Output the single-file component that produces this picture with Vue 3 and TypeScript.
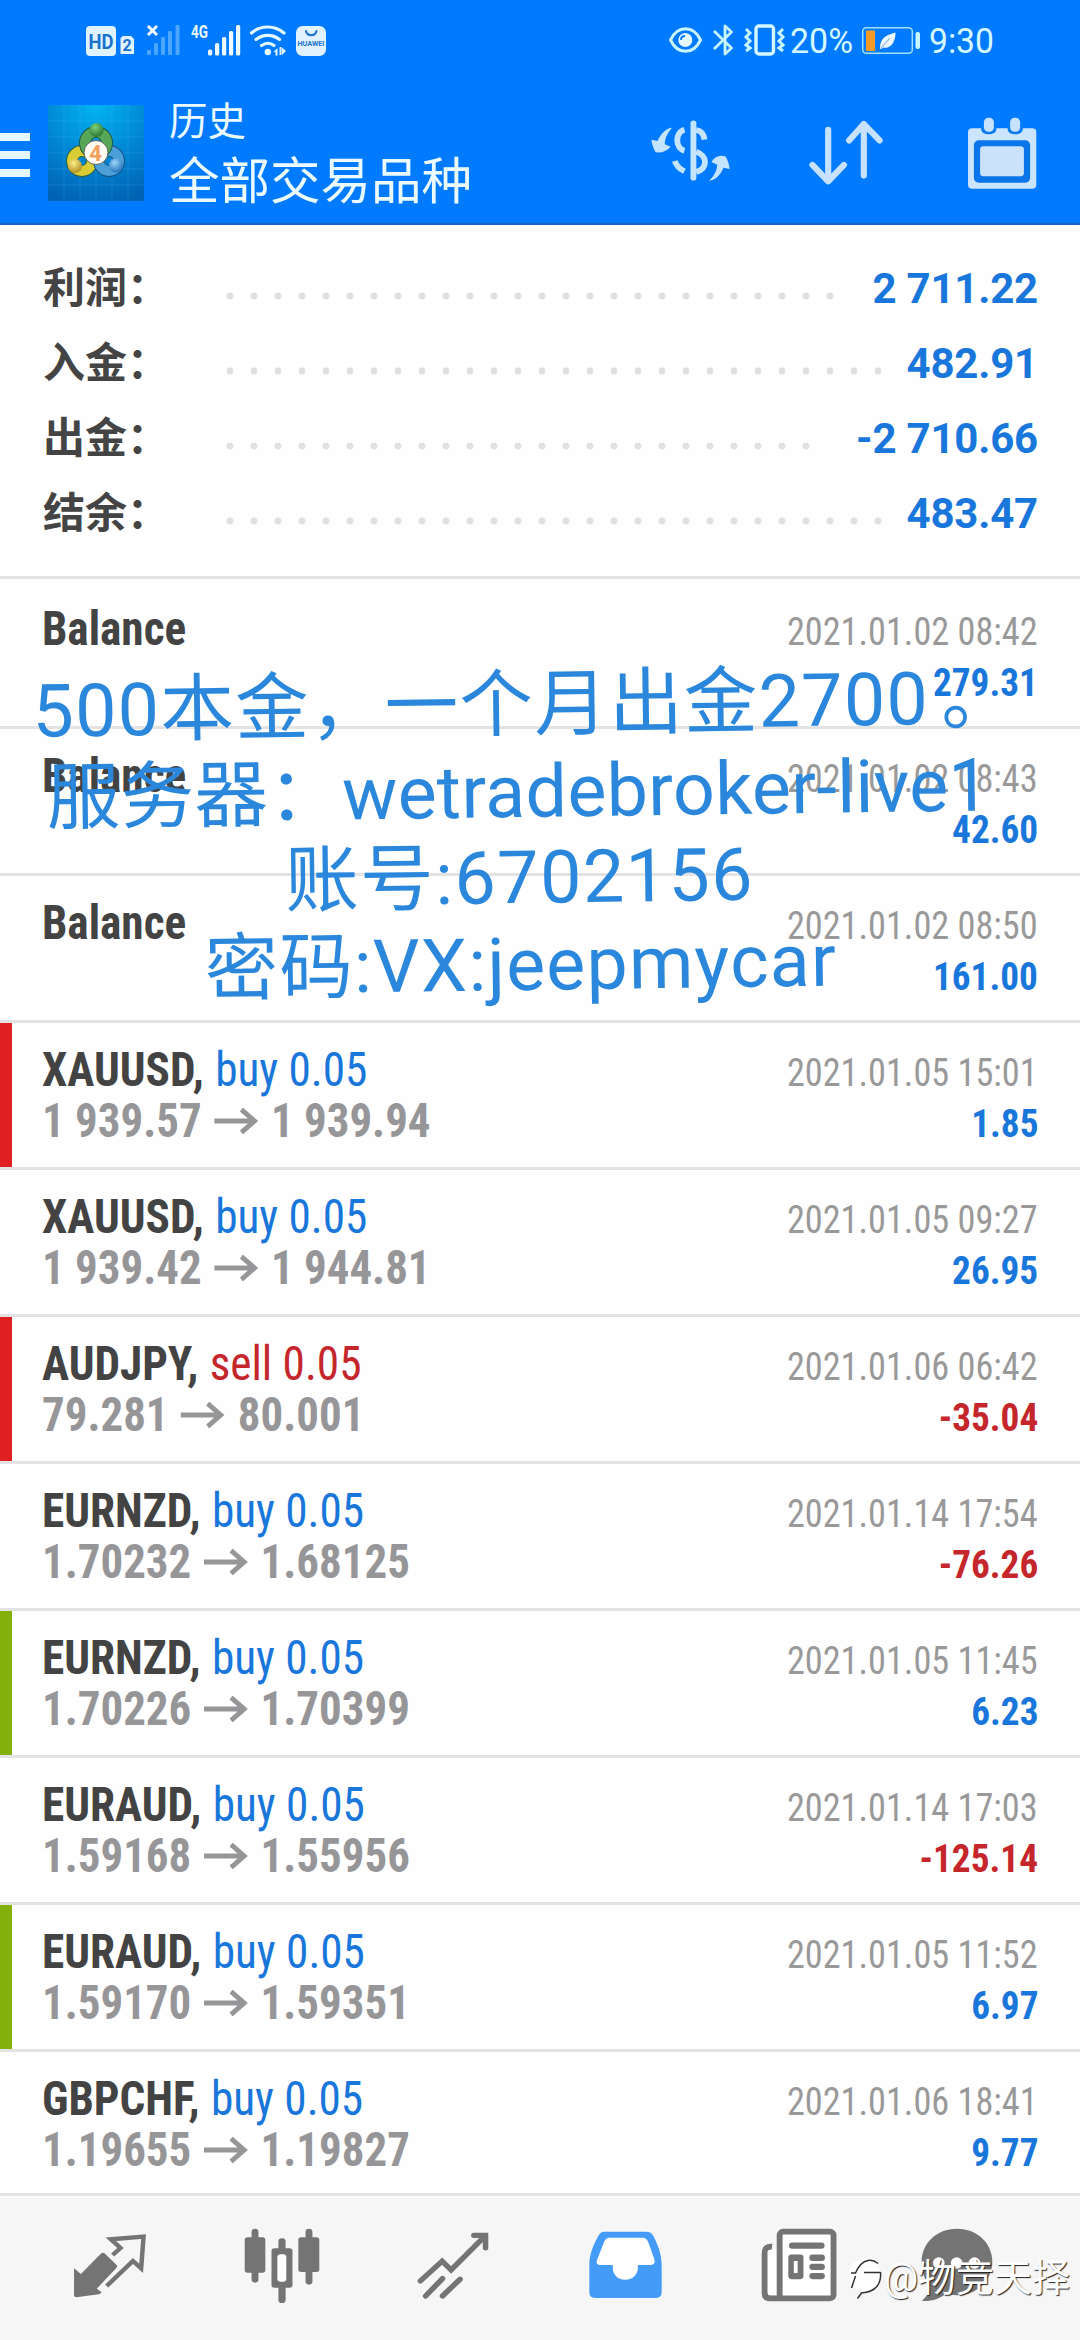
<script setup lang="ts">
interface Total {
  label: string
  value: string
  dots: number
}

interface Deal {
  symbol: string
  side?: 'buy' | 'sell'
  volume?: string
  open?: string
  close?: string
  time: string
  profit: string
  mark?: 'red' | 'green'
}

interface Note {
  text: string
  end?: string
  spacing: number
}

const dotStep = 24

const totals: Total[] = [
  { label: '利润：', value: '2 711.22', dots: 26 },
  { label: '入金：', value: '482.91', dots: 28 },
  { label: '出金：', value: '-2 710.66', dots: 25 },
  { label: '结余：', value: '483.47', dots: 28 },
]

const deals: Deal[] = [
  { symbol: 'Balance', time: '2021.01.02 08:42', profit: '279.31' },
  { symbol: 'Balance', time: '2021.01.02 08:43', profit: '42.60' },
  { symbol: 'Balance', time: '2021.01.02 08:50', profit: '161.00' },
  { symbol: 'XAUUSD', side: 'buy', volume: '0.05', open: '1 939.57', close: '1 939.94', time: '2021.01.05 15:01', profit: '1.85', mark: 'red' },
  { symbol: 'XAUUSD', side: 'buy', volume: '0.05', open: '1 939.42', close: '1 944.81', time: '2021.01.05 09:27', profit: '26.95' },
  { symbol: 'AUDJPY', side: 'sell', volume: '0.05', open: '79.281', close: '80.001', time: '2021.01.06 06:42', profit: '-35.04', mark: 'red' },
  { symbol: 'EURNZD', side: 'buy', volume: '0.05', open: '1.70232', close: '1.68125', time: '2021.01.14 17:54', profit: '-76.26' },
  { symbol: 'EURNZD', side: 'buy', volume: '0.05', open: '1.70226', close: '1.70399', time: '2021.01.05 11:45', profit: '6.23', mark: 'green' },
  { symbol: 'EURAUD', side: 'buy', volume: '0.05', open: '1.59168', close: '1.55956', time: '2021.01.14 17:03', profit: '-125.14' },
  { symbol: 'EURAUD', side: 'buy', volume: '0.05', open: '1.59170', close: '1.59351', time: '2021.01.05 11:52', profit: '6.97', mark: 'green' },
  { symbol: 'GBPCHF', side: 'buy', volume: '0.05', open: '1.19655', close: '1.19827', time: '2021.01.06 18:41', profit: '9.77' },
]

const notes: Note[] = [
  { text: '500本金，一个月出金2700', end: '。', spacing: 1.3 },
  { text: '服务器：wetradebroker-live1', spacing: 0.35 },
  { text: '账号:6702156', spacing: 1.5 },
  { text: '密码:VX:jeepmycar', spacing: 1.2 },
]
</script>

<template>
  <div class="screen">
    <header class="top">
      <div class="status">
        <svg class="status-left" width="242" height="36" viewBox="85 23 242 36">
          <rect x="86" y="26" width="30" height="30" rx="4" fill="#e0f2ff" />
          <text x="101" y="48.500" text-anchor="middle" textLength="25" lengthAdjust="spacingAndGlyphs" font-size="20" font-weight="700" fill="#1a72cf">HD</text>
          <path d="M123 36h8l3 3v15h-13.500v-16z" fill="#e0f2ff" />
          <text x="127.200" y="51" text-anchor="middle" font-size="16" font-weight="700" fill="#1a72cf">2</text>
          <path d="M148 26l9 9M157 26l-9 9" stroke="#f0faff" stroke-width="3" />
          <g fill="#4ba6ff">
            <rect x="147" y="50" width="4" height="5" rx="1" />
            <rect x="154" y="43" width="4" height="12" rx="1" />
            <rect x="161" y="37" width="4" height="18" rx="1" />
            <rect x="168" y="31" width="4" height="24" rx="1" />
            <rect x="175.500" y="25" width="4" height="30" rx="1" />
          </g>
          <text x="191" y="38" textLength="17" lengthAdjust="spacingAndGlyphs" font-size="18" font-weight="700" fill="#e8f8ff">4G</text>
          <g fill="#eefaff">
            <rect x="208" y="49.500" width="4.200" height="6" rx="1.500" />
            <rect x="215" y="43" width="4.200" height="12.500" rx="1.500" />
            <rect x="222" y="37" width="4.200" height="18.500" rx="1.500" />
            <rect x="229" y="31" width="4.200" height="24.500" rx="1.500" />
            <rect x="236" y="25" width="4.200" height="30.500" rx="1.500" />
          </g>
          <g fill="none" stroke="#e2f7ff" stroke-width="3.200" stroke-linecap="round">
            <path d="M251.500 33c9-8 23-8 32.500 0" />
            <path d="M256 39.500c7-5.500 16.500-5.500 23.500 0" />
            <path d="M261.500 45.500c4-3 9-3 12.500 0" />
          </g>
          <circle cx="267.800" cy="52" r="3.200" fill="#e2f7ff" />
          <path d="M273.500 52l4-4v7.500h-2v-3.500zM286 51l-4 4v-7.500zM279.500 47h2v8h-2z" fill="#e2f7ff" />
          <rect x="296" y="26" width="30" height="30" rx="6.500" fill="#e0f2ff" />
          <path d="M306 31c1 5.500 9.500 5.500 10.500 0" fill="none" stroke="#1a72cf" stroke-width="2" stroke-linecap="round" />
          <text x="311" y="46" text-anchor="middle" textLength="27" lengthAdjust="spacingAndGlyphs" font-size="7" font-weight="700" fill="#1a72cf">HUAWEI</text>
        </svg>
        <svg class="status-right" width="326" height="36" viewBox="668 23 326 36">
          <path d="M670.500 40c7-15 23-15 30 0c-7 15-23 15-30 0z" fill="none" stroke="#c8f6ff" stroke-width="3" />
          <circle cx="685.300" cy="40" r="7" fill="#e2f7ff" />
          <path d="M681 40c0-2.500 1.500-4 4-4" fill="none" stroke="#007aff" stroke-width="1.800" />
          <path d="M714 31l17.500 17-6.500 6v-28l6.500 6-17.500 17" fill="none" stroke="#c8f6ff" stroke-width="2.800" stroke-linejoin="round" />
          <rect x="756" y="26" width="17.500" height="28" rx="3" fill="none" stroke="#d4f8ff" stroke-width="3.400" />
          <path d="M746 29l4 4-4 4 4 4-4 4 4 3-4 3M783 29l-4 4 4 4-4 4 4 4-4 3 4 3" fill="none" stroke="#c8f6ff" stroke-width="3" />
          <text x="790" y="53" textLength="63" lengthAdjust="spacingAndGlyphs" font-size="34.500" fill="#d4f8ff">20%</text>
          <rect x="862.700" y="27.700" width="49.600" height="25.600" rx="3.500" fill="none" stroke="#9fe0ff" stroke-width="1.500" />
          <rect x="866" y="30.500" width="9" height="20.500" fill="#f39b26" />
          <path d="M880 48.500c0-9 4-13 15.500-16c0 10-5 16.500-12 15l-2.500 1.500z" fill="#eef8ff" />
          <path d="M881 48l9-10" stroke="#9fc0dd" stroke-width="1.200" />
          <rect x="915.500" y="32" width="4.500" height="17" rx="2" fill="#c8f6ff" />
          <text x="929" y="53" textLength="65" lengthAdjust="spacingAndGlyphs" font-size="34.500" fill="#d4f8ff">9:30</text>
        </svg>
      </div>
      <div class="bar">
        <div class="burger"><i></i><i></i><i></i></div>
        <svg class="logo" width="96" height="96" viewBox="0 0 96 96">
          <defs>
            <radialGradient id="sky" cx=".5" cy="0" r="1.050">
              <stop offset="0" stop-color="#00b4f2" />
              <stop offset=".55" stop-color="#0084d2" />
              <stop offset="1" stop-color="#0062b2" />
            </radialGradient>
            <radialGradient id="green" cx=".4" cy=".3" r=".8">
              <stop offset="0" stop-color="#7fd07a" />
              <stop offset="1" stop-color="#1d6d2b" />
            </radialGradient>
            <radialGradient id="gold" cx=".4" cy=".3" r=".8">
              <stop offset="0" stop-color="#fff08a" />
              <stop offset="1" stop-color="#a58212" />
            </radialGradient>
            <radialGradient id="blue" cx=".4" cy=".3" r=".8">
              <stop offset="0" stop-color="#9bd5fa" />
              <stop offset="1" stop-color="#1768b4" />
            </radialGradient>
          </defs>
          <rect width="96" height="96" fill="url(#sky)" />
          <path d="M16 0v96M32 0v96M48 0v96M64 0v96M80 0v96M0 16h96M0 32h96M0 48h96M0 64h96M0 80h96" stroke="#52c4f5" stroke-opacity=".2" />
          <g fill="none" stroke-width="10">
            <circle cx="34" cy="56" r="10" stroke="#31613a" stroke-width="12" />
            <circle cx="34" cy="56" r="10" stroke="#d9cc35" />
            <circle cx="61" cy="56" r="10" stroke="#155283" stroke-width="12" />
            <circle cx="61" cy="56" r="10" stroke="#4a9fd8" />
            <circle cx="48" cy="38" r="11" stroke="#1c5c45" stroke-width="12" />
            <circle cx="48" cy="38" r="11" stroke="#57a856" />
          </g>
          <circle cx="48.500" cy="25" r="7" fill="url(#green)" />
          <circle cx="27" cy="61" r="7" fill="url(#gold)" />
          <circle cx="68" cy="60.500" r="7" fill="url(#blue)" />
          <circle cx="48" cy="47.500" r="12" fill="#fffaf2" stroke="#59645a" stroke-width="1" />
          <text x="47.500" y="55.500" text-anchor="middle" font-size="22" font-weight="700" fill="#f3a05c">4</text>
        </svg>
        <div class="titles">
          <span class="title">历史</span>
          <span class="subtitle">全部交易品种</span>
        </div>
        <div class="tools">
          <svg width="79" height="62" viewBox="321 361 229 186" preserveAspectRatio="none">
            <g fill="#c4e4ff">
              <path d="M382 384c-15 0-33 17-42 40l-18-4c1 12 6 26 12 37c14 5 32-2 44-16l-17-7c0-18 8-35 21-50z" />
              <path d="M489 543c15 0 34-16 42-39l18 4c-1-13-5-25-11-37c-14-7-32-2-42 16l17 8c-1 18-9 34-24 48z" />
            </g>
            <g fill="none" stroke="#c4e4ff" stroke-width="17">
              <path d="M444 371v163" stroke-linecap="round" />
              <path d="M418 390c-28 8-28 56 0 63M390 484c5 16 14 24 28 31M452 391c14 2 22 10 24 29M452 456c34 14 34 50 0 61" />
            </g>
          </svg>
          <svg width="74" height="65" viewBox="780 360 216 194" preserveAspectRatio="none" fill="none" stroke="#c6e2ff" stroke-width="18" stroke-linecap="round" stroke-linejoin="round">
            <path d="M836 389v154M790 494l46 49 46-49M940 526v-154M897 421l43-49 46 49" />
          </svg>
          <svg width="70" height="73" viewBox="1240 347 203 219" preserveAspectRatio="none">
            <rect x="1243" y="381" width="198" height="181" rx="12" fill="#cbe4ff" />
            <path d="M1281 376h44v10q-4 13-22 13t-22-13zM1358 376h44v10q-4 13-22 13t-22-13z" fill="#0a7cf2" />
            <rect x="1289" y="349" width="29" height="42" rx="13" fill="#c6e2ff" />
            <rect x="1365" y="349" width="29" height="42" rx="13" fill="#c6e2ff" />
            <rect x="1260" y="417" width="163" height="127" rx="14" fill="#0a76ea" />
            <rect x="1278" y="435" width="127" height="90" rx="10" fill="#cbe2fb" />
          </svg>
        </div>
      </div>
    </header>

    <section class="totals">
      <div v-for="t in totals" :key="t.label" class="total">
        <span class="label">{{ t.label }}</span>
        <span class="leader" :style="{ width: t.dots * dotStep + 'px' }"></span>
        <span class="sum">{{ t.value }}</span>
      </div>
    </section>

    <main class="deals">
      <article v-for="(d, i) in deals" :key="i" class="deal" :class="d.mark">
        <div class="line">
          <div class="name"><b>{{ d.symbol }}<template v-if="d.side">,</template></b><span v-if="d.side" :class="d.side">{{ d.side }} {{ d.volume }}</span></div>
          <time>{{ d.time }}</time>
        </div>
        <div class="line">
          <div v-if="d.open" class="prices">
            <span>{{ d.open }}</span>
            <svg width="48" height="26" viewBox="0 0 48 26" fill="none" stroke="#969699" stroke-width="5"><path d="M0 13h44M29 1.500l14 11.500-14 11.500" /></svg>
            <span>{{ d.close }}</span>
          </div>
          <strong :class="{ loss: d.profit.startsWith('-') }">{{ d.profit }}</strong>
        </div>
      </article>
    </main>

    <nav class="tabs">
      <svg width="74" height="66" viewBox="213 160 215 198" preserveAspectRatio="none">
        <path d="M216 266l20 17 58-61q6-6 12 0l33 33q4 5 0 10l-57 62 14 10q-2 6-8 7l-65 9q-7 0-7-7z" fill="#747474" />
        <path d="M328 226l23-21-28-26 95-8-7 95-24-22-76 75" fill="none" stroke="#747474" stroke-width="13" />
      </svg>
      <svg width="76" height="76" viewBox="707 145 221 228" preserveAspectRatio="none" fill="#747474">
        <rect x="709" y="173" width="60" height="106" rx="8" />
        <rect x="729" y="147" width="20" height="162" rx="10" />
        <rect x="865" y="173" width="61" height="104" rx="8" />
        <rect x="886" y="147" width="20" height="168" rx="10" />
        <rect x="807" y="176" width="21" height="194" rx="10" />
        <rect x="787" y="206" width="61" height="118" rx="8" />
        <rect x="804" y="224" width="26" height="82" rx="9" fill="#fff" />
      </svg>
      <svg width="72" height="69" viewBox="1212 152 209 206" preserveAspectRatio="none" fill="none" stroke="#747474" stroke-width="16" stroke-linecap="round">
        <path d="M1222 301l63-59 26 26 98-101M1377 165h34v37M1237 346l49-52M1286 346l51-50" />
      </svg>
      <svg width="73" height="68" viewBox="145 154 212 202" preserveAspectRatio="none">
        <path d="M190 156h120q16 0 22 13c13 25 24 56 24 84v83q0 17-17 17H163q-17 0-17-17v-83c0-28 12-60 26-84q6-13 18-13z" fill="#449cf8" />
        <path d="M204 174h96q12 0 17 13l18 52q4 15-10 16h-38v8c0 18-14 36-37 36s-36-18-36-36v-8h-38q-12-1-8-14l20-53q5-14 16-14z" fill="#fff" />
      </svg>
      <svg width="76" height="74" viewBox="645 145 220 220" preserveAspectRatio="none">
        <path d="M677 201q-21-2-21 19v120q0 14 16 14h36" fill="none" stroke="#747474" stroke-width="18" />
        <path d="M664 215q2-6 13-6h14v136h-21q-6 0-6-8z" fill="#fff" />
        <rect x="699" y="156" width="156" height="198" rx="10" fill="#fff" stroke="#747474" stroke-width="17" />
        <g fill="#747474">
          <rect x="726" y="188" width="103" height="19" rx="9" />
          <rect x="724" y="224" width="44" height="73" rx="9" />
          <rect x="785" y="224" width="45" height="19" rx="9" />
          <rect x="785" y="251" width="45" height="19" rx="9" />
          <rect x="785" y="279" width="45" height="18" rx="9" />
        </g>
        <rect x="740" y="243" width="11" height="36" fill="#fff" />
      </svg>
      <svg width="72" height="74" viewBox="1108 145 210 220" preserveAspectRatio="none">
        <path d="M1213 147c60 0 103 44 103 98s-43 100-103 100q-17 0-31-5c-21 17-45 24-71 22c12-12 21-24 24-42c-16-20-25-44-25-75c0-54 43-98 103-98z" fill="#747474" />
        <g fill="#fff"><circle cx="1160" cy="249" r="17" /><circle cx="1212" cy="249" r="17" /><circle cx="1264" cy="249" r="17" /></g>
      </svg>
    </nav>

    <div class="note">
      <div v-for="n in notes" :key="n.text" :class="{ wide: n.end }" :style="{ letterSpacing: n.spacing + 'px' }">{{ n.text }}<span v-if="n.end" class="stop">{{ n.end }}</span></div>
    </div>

    <div class="mark">
      <svg width="38" height="48" viewBox="844 2258 38 48">
        <ellipse cx="862.500" cy="2279" rx="16" ry="16" fill="#fff" />
        <path d="M849 2277h4.500c3-7 7-11.500 12.500-12.500 4-.7 7 .5 10 3M862 2276.500h16.500M853.500 2280l-4 12M878.500 2276c1 11-4 20-19 21l-4 5.500" fill="none" stroke="#333" stroke-width="1.500" />
      </svg>
      <span>@物竞天择</span>
    </div>
  </div>
</template>

<style>
body {
  margin: 0;
  background: #fefefe;
}
</style>

<style scoped>
.screen {
  position: relative;
  width: 1080px;
  height: 2340px;
  overflow: hidden;
  display: flex;
  flex-direction: column;
  background: #fefefe;
  font-family: Roboto, "Noto Sans CJK SC", sans-serif;
}
svg {
  display: block;
  flex: none;
}
.top {
  height: 225px;
  box-sizing: border-box;
  background: #007aff;
  border-bottom: 2px solid #1766c0;
  flex: none;
}
.status {
  display: flex;
  justify-content: space-between;
  padding: 23px 86px 0 85px;
}
.status svg {
  overflow: visible;
}
.bar {
  display: flex;
  align-items: flex-start;
  height: 166px;
}
.burger {
  width: 30px;
  margin-top: 74px;
  display: flex;
  flex-direction: column;
  gap: 10px;
}
.burger i {
  height: 8px;
  background: #e6f8ff;
}
.logo {
  margin: 46px 0 0 18px;
}
.titles {
  display: flex;
  flex-direction: column;
  margin: 41px 0 0 25px;
  color: #eafaff;
  white-space: nowrap;
}
.title {
  font-size: 38.500px;
  line-height: 44px;
}
.subtitle {
  font-size: 50.500px;
  line-height: 60px;
  margin-top: 8px;
}
.tools {
  margin: 58px 43px 0 auto;
  display: flex;
}
.tools svg:nth-child(1) {
  margin: 3px 79px 0 0;
}
.tools svg:nth-child(2) {
  margin: 3px 84px 0 0;
}
.totals {
  height: 351px;
  box-sizing: border-box;
  padding: 26px 42px 0 43px;
  flex: none;
}
.total {
  display: flex;
  align-items: center;
  height: 75px;
}
.label {
  width: 175px;
  font-size: 42px;
  font-weight: 700;
  line-height: 77px;
  color: #444;
  white-space: nowrap;
}
.leader {
  height: 8px;
  margin-top: 15px;
  background: radial-gradient(circle at 12px 4px, #e0e0e0 3px, transparent 4px) 0 0 / 24px 8px;
}
.sum {
  margin-left: auto;
  font-size: 42px;
  font-weight: 700;
  line-height: 75px;
  letter-spacing: -0.200px;
  color: #1976da;
}
.deals {
  box-sizing: border-box;
  border-top: 3px solid #e3e3e3;
  padding-top: 3px;
  height: 1617px;
  overflow: hidden;
  flex: none;
  font-family: "Roboto Condensed", Roboto, sans-serif;
  font-stretch: 75%;
}
.deal {
  height: 147px;
  box-sizing: border-box;
  padding: 21px 42px 0 30px;
  border-bottom: 3px solid #e3e3e3;
  border-left: 12px solid transparent;
  position: relative;
}
.deal::before {
  content: "";
  position: absolute;
  left: -12px;
  top: 0;
  width: 12px;
  height: 147px;
  box-sizing: border-box;
  border-bottom: 3px solid #e3e3e3;
}
.deal.red::before {
  background: #e01f20;
}
.deal.green::before {
  background: #83b00a;
}
.line {
  display: flex;
  align-items: baseline;
  height: 51px;
  line-height: 51px;
  font-size: 48px;
  white-space: nowrap;
}
.line::before {
  content: "\200b";
  width: 0;
}
.name {
  display: flex;
  gap: 12px;
  color: #434343;
  transform: scaleX(0.942);
  transform-origin: left;
}
.buy {
  color: #1976da;
}
.sell {
  color: #c5262b;
}
time {
  margin-left: auto;
  font-size: 39px;
  color: #999;
  transform: scaleX(0.93);
  transform-origin: right;
}
.prices {
  display: flex;
  align-items: center;
  gap: 13px;
  height: 51px;
  font-weight: 700;
  color: #969699;
  transform: scaleX(0.936);
  transform-origin: left;
}
.line strong {
  margin-left: auto;
  font-size: 39px;
  color: #1976da;
  transform: scaleX(0.955);
  transform-origin: right;
}
.line strong.loss {
  color: #c5262b;
}
.tabs {
  flex: 1;
  display: flex;
  align-items: flex-start;
  border-top: 3px solid #e3e3e3;
  box-shadow: inset 0 2px #fff;
  background: #f6f6f6;
}
.tabs svg:nth-child(1) {
  margin: 37px 0 0 73px;
}
.tabs svg:nth-child(2) {
  margin: 32px 0 0 97px;
}
.tabs svg:nth-child(3) {
  margin: 35px 0 0 97px;
}
.tabs svg:nth-child(4) {
  margin: 35px 0 0 100px;
}
.tabs svg:nth-child(5) {
  margin: 32px 0 0 99px;
}
.tabs svg:nth-child(6) {
  margin: 32px 0 0 84px;
}
.note {
  position: absolute;
  left: -81px;
  top: 662px;
  width: 1200px;
  text-align: center;
  white-space: nowrap;
  font-size: 73.500px;
  line-height: 86.500px;
  color: #2a87db;
  transform: rotate(-0.800deg);
}
.note div {
  height: 86.500px;
}
.note .wide {
  padding-left: 14px;
}
.stop {
  padding-left: 12px;
}
.mark {
  position: absolute;
  left: 846px;
  top: 2254px;
  display: flex;
  align-items: center;
  color: #fff;
  font-size: 38px;
  line-height: 48px;
  white-space: nowrap;
  text-shadow: 1px 1px 1px #222;
}
</style>
